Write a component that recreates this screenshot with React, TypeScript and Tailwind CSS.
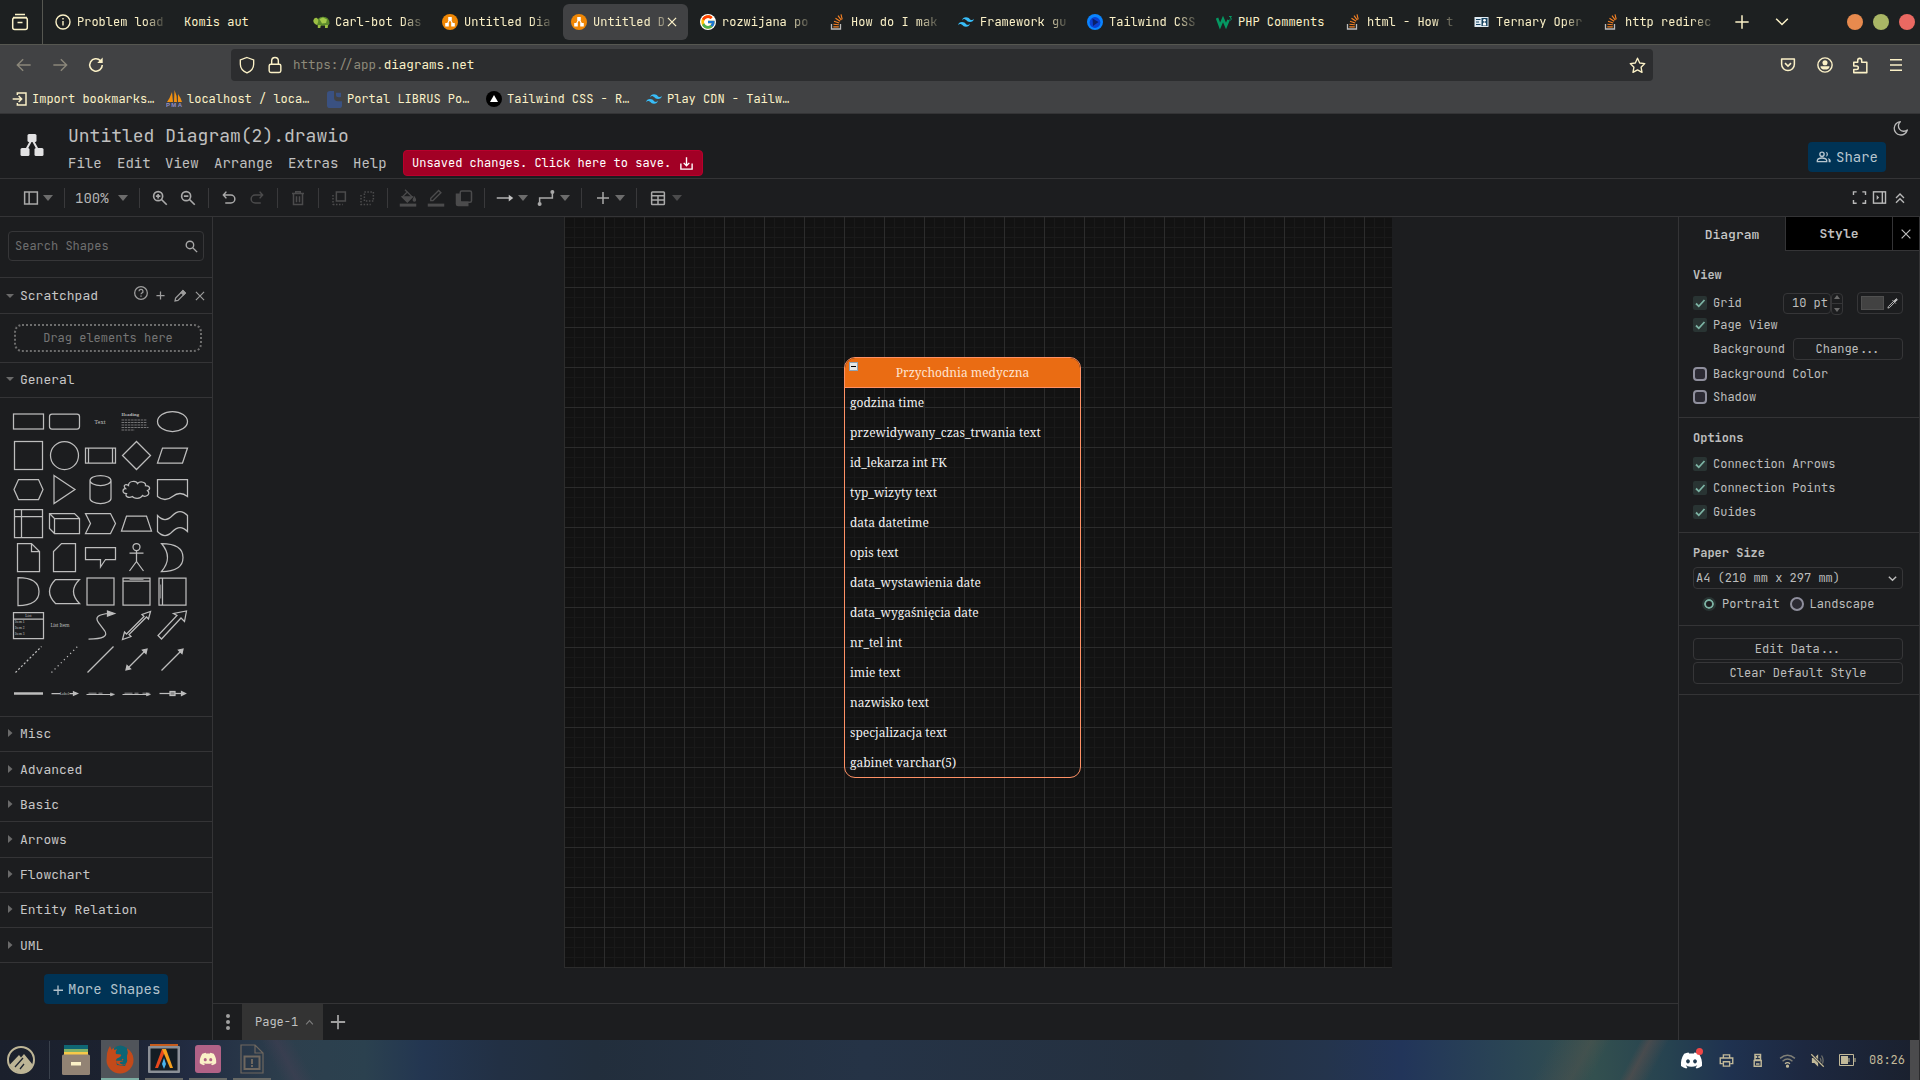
import React from "react";
import { FcGoogle } from "react-icons/fc";
import { FaStackOverflow, FaDiscord } from "react-icons/fa";
import { SiTailwindcss } from "react-icons/si";

type Kids = { children?: React.ReactNode };

/* ---------- small helpers ---------- */

function Icon({ size = 18, className = "", children, sw = 2 }: Kids & { size?: number; className?: string; sw?: number }) {
  return (
    <svg width={size} height={size} viewBox="0 0 24 24" fill="none" stroke="currentColor" strokeWidth={sw} className={"shrink-0 " + className}>
      {children}
    </svg>
  );
}

const Caret = ({ className = "" }: { className?: string }) => (
  <svg width="10" height="6" viewBox="0 0 10 6" className={"shrink-0 " + className} fill="currentColor">
    <path d="M0 0h10L5 6z" />
  </svg>
);

const DrawioFav = () => (
  <svg width="16" height="16" viewBox="0 0 16 16" className="shrink-0">
    <circle cx="8" cy="8" r="8" fill="#f08705" />
    <path d="M8 5L5 10.5M8 5l3 5.500" stroke="#fff" strokeWidth="1.200" />
    <rect x="6.200" y="3" width="3.600" height="3.600" rx=".5" fill="#fff" />
    <rect x="3.200" y="9" width="3.600" height="3.600" rx=".5" fill="#fff" />
    <rect x="9.200" y="9" width="3.600" height="3.600" rx=".5" fill="#fff" />
  </svg>
);

const InfoFav = () => (
  <svg width="16" height="16" viewBox="0 0 16 16" fill="none" stroke="#fbf1c7" strokeWidth="1.400" className="shrink-0">
    <circle cx="8" cy="8" r="7" />
    <path d="M8 7v4.500M8 4v1.600" />
  </svg>
);

const TurtleFav = () => (
  <svg width="17" height="16" viewBox="0 0 17 16" className="shrink-0">
    <path d="M4 10.500Q3.500 3 10 2.800q6.500.2 6.500 7L15 11.800H5z" fill="#5c8a2c" />
    <path d="M6.500 5l3.500-1.500L14 5.500l-1 3.500-4 .5z" fill="#a3c94a" />
    <path d="M.3 6.500Q1 3.300 3.500 3.800 6 5 5 8.500L4 11Q.3 9.500.3 6.500zM4.800 11h3l-.5 3h-2.500zM12 11h3l-.3 3h-2.700z" fill="#9cbf43" />
  </svg>
);

const BlueFav = () => (
  <svg width="16" height="16" viewBox="0 0 16 16" className="shrink-0">
    <circle cx="8" cy="8" r="8" fill="#0a84ff" />
    <circle cx="8" cy="8.500" r="5.400" fill="#0b3fd0" />
    <path d="M5.500 4.500l6 3.500-5.500 4z" fill="#0a1f6b" />
  </svg>
);

const W3Fav = () => (
  <svg width="17" height="16" viewBox="0 0 17 16" fill="none" className="shrink-0">
    <path d="M1 4l3 8 3-7 3 7 2.500-6" stroke="#059862" strokeWidth="2.600" />
    <path d="M13 2.500h2.500L14.200 4q1.500.2 1.200 1.400-.4 1-2.200.6" stroke="#059862" strokeWidth="1" />
  </svg>
);

const CardFav = () => (
  <svg width="15" height="16" viewBox="0 0 15 16" className="shrink-0">
    <rect x=".5" y="3" width="14" height="10" fill="#dfeaf2" />
    <path d="M2 5.500h4.500M2 8h3M2 10.500h4.500" stroke="#16425f" />
    <rect x="7.500" y="4" width="6" height="8" fill="#16425f" />
    <circle cx="10.500" cy="6.300" r="1.400" fill="#fff" />
    <path d="M8.800 11.500q0-3.300 1.700-3.300t1.700 3.300z" fill="#fff" />
  </svg>
);

const StackFav = () => (
  <svg width="16" height="16" viewBox="0 0 16 16" fill="none" className="shrink-0">
    <path d="M2.500 10v5h9v-5" stroke="#bcbbbb" strokeWidth="1.300" />
    <path d="M4.300 12.800h5.500M4.400 10.200l5.400.6M5 7.300l5.200 1.700M6.500 4.300l4.600 3M9 1.600l3.300 4.500M12 .3l1.200 5" stroke="#f48024" strokeWidth="1.150" />
  </svg>
);
const WindFav = ({ s = 16 }: { s?: number }) => <SiTailwindcss size={s} color="#38bdf8" className="shrink-0" />;

/* ---------- browser chrome ---------- */

const tabs: { icon?: React.ReactNode; title: string; active?: boolean }[] = [
  { icon: <InfoFav />, title: "Problem load" },
  { title: "Komis aut" },
  { icon: <TurtleFav />, title: "Carl-bot Das" },
  { icon: <DrawioFav />, title: "Untitled Dia" },
  { icon: <DrawioFav />, title: "Untitled D", active: true },
  { icon: <FcGoogle size={16} className="shrink-0 rounded-full bg-white" />, title: "rozwijana po" },
  { icon: <StackFav />, title: "How do I mak" },
  { icon: <WindFav />, title: "Framework gu" },
  { icon: <BlueFav />, title: "Tailwind CSS" },
  { icon: <W3Fav />, title: "PHP Comments" },
  { icon: <StackFav />, title: "html - How t" },
  { icon: <CardFav />, title: "Ternary Oper" },
  { icon: <StackFav />, title: "http redirec" },
];

function TabBar() {
  return (
    <div className="flex h-[45px] shrink-0 items-center border-b border-[#565751] bg-[#1d2021] text-[#fbf1c7]">
      <div className="flex h-full w-[43px] items-center border-r border-[#565751] pl-[11px]">
        <svg width="18" height="18" viewBox="0 0 18 18" fill="none" stroke="currentColor" strokeWidth="1.500">
          <path d="M4 1.500h10M2 4.500h14" />
          <rect x="1.700" y="4.700" width="14.600" height="11.800" rx="2" />
          <path d="M6.500 9.500h5" />
        </svg>
      </div>
      <div className="ml-1 flex gap-1">
        {tabs.map((t, i) => (
          <div key={i} className={"flex h-9 w-[125px] items-center rounded-md pl-2 " + (t.active ? "bg-[#414244]" : "")}>
            {t.icon && <span className="flex w-[22px] shrink-0">{t.icon}</span>}
            <span
              className={
                "leading-5 whitespace-pre " +
                (t.active
                  ? "[mask-image:linear-gradient(to_right,#000_78%,transparent_112%)]"
                  : t.icon && i !== 9
                    ? "[mask-image:linear-gradient(to_right,#000_78%,transparent_106%)]"
                    : "")
              }
            >
              {t.title}
            </span>
            {t.active && (
              <Icon size={14} sw={2.200}>
                <path d="M5 5l14 14M19 5L5 19" />
              </Icon>
            )}
          </div>
        ))}
      </div>
      <Icon size={20} sw={1.800} className="ml-[12px]">
        <path d="M12 4v16M4 12h16" />
      </Icon>
      <Icon size={20} sw={1.800} className="ml-5">
        <path d="M5 8l7 7 7-7" />
      </Icon>
      <div className="ml-[55px] flex gap-2.5">
        <div className="size-4 rounded-full bg-[#e78a4e]" />
        <div className="size-4 rounded-full bg-[#a9b665]" />
        <div className="size-4 rounded-full bg-[#ea6962]" />
      </div>
    </div>
  );
}

function NavBar() {
  return (
    <div className="flex h-[40px] items-center text-[#fbf1c7]">
      <Icon size={20} sw={1.700} className="ml-[14px] text-[#8b877a]">
        <path d="M20 12H4M11 5l-7 7 7 7" />
      </Icon>
      <Icon size={20} sw={1.700} className="ml-4 text-[#8b877a]">
        <path d="M4 12h16M13 5l7 7-7 7" />
      </Icon>
      <Icon size={20} sw={1.900} className="ml-4">
        <path d="M19.500 12a7.500 7.500 0 1 1-2.200-5.300L19 8" />
        <path d="M20 3v6.500h-6.500z" fill="currentColor" stroke="none" />
      </Icon>
      <div className="ml-[125px] flex h-8 w-[1422px] items-center rounded bg-[#2c2d2f] pl-[6px]">
        <Icon size={20} sw={1.600}>
          <path d="M12 3l8 3v5c0 5-3.500 8.500-8 10.500C7.500 19.500 4 16 4 11V6z" />
        </Icon>
        <Icon size={20} sw={1.700} className="ml-2">
          <rect x="5" y="11" width="14" height="10" rx="2" />
          <path d="M8 11V7a4 4 0 0 1 8 0v4" />
        </Icon>
        <span className="mt-px ml-[8px] text-[12.6px] text-[#8e8a7a]">
          https://app.<span className="text-[#fbf1c7]">diagrams.net</span>
        </span>
        <Icon size={19} sw={1.700} className="mr-[6px] ml-auto">
          <path d="M12 2.800l2.800 6 6.400.8-4.700 4.500 1.200 6.600-5.700-3.200-5.700 3.200 1.200-6.600L2.800 9.600l6.400-.8z" strokeLinejoin="round" />
        </Icon>
      </div>
      <Icon size={18} sw={2} className="ml-[126px]">
        <path d="M3.500 4h17v7a8.500 8.500 0 0 1-17 0z" strokeLinejoin="round" />
        <path d="M8 9.500l4 4 4-4" />
      </Icon>
      <Icon size={18} sw={1.900} className="ml-[19px]">
        <circle cx="12" cy="12" r="9.500" />
        <circle cx="12" cy="9" r="3.400" fill="currentColor" stroke="none" />
        <path d="M6 13.500h12q0 4.500-6 4.500t-6-4.500z" fill="currentColor" stroke="none" />
      </Icon>
      <Icon size={19} sw={1.900} className="ml-[17px]">
        <path d="M3.500 8h5V5.500a2.500 2.500 0 0 1 5 0V8H20v13H3.500v-4H7a2.200 2.200 0 0 0 0-4.500H3.500z" strokeLinejoin="round" />
      </Icon>
      <Icon size={18} sw={1.700} className="ml-[17px]">
        <path d="M4 5h16M4 12h16M4 19h16" />
      </Icon>
    </div>
  );
}

function Bookmarks() {
  return (
    <div className="flex h-[28px] items-center whitespace-nowrap text-[#fbf1c7]">
      <div className="flex w-[154px] items-center gap-1 pl-3">
        <Icon size={16} sw={2.200}>
          <path d="M8 6V3h13v18H8v-3" />
          <path d="M1 12h13M10 7.500l4.500 4.500-4.500 4.500" />
        </Icon>
        Import bookmarks…
      </div>
      <div className="flex w-[160px] items-center gap-1 pl-3">
        <svg width="17" height="18" viewBox="0 0 17 18" className="shrink-0">
          <path d="M1 12Q4 8 6 2l1 10zM8 12l.5-12Q11 5 11 12zM12 12V4q3 4 4 8z" fill="#f29111" />
          <text x="0" y="17" fontSize="6" fontWeight="bold" fontFamily="Liberation Sans, sans-serif" fill="#8d8dc8" textLength="16">PMA</text>
        </svg>
        localhost / loca…
      </div>
      <div className="flex w-[160px] items-center gap-1 pl-3">
        <svg width="17" height="17" viewBox="0 0 17 20" preserveAspectRatio="none" className="shrink-0">
          <rect x="1" y="0" width="15" height="20" rx="3" fill="#3a5181" />
          <path d="M8 0v8q0 4 4 4h4V0z" fill="#414244" />
          <path d="M10 2h5v5q-5 1-5-2z" fill="#3a5181" />
        </svg>
        Portal LIBRUS Po…
      </div>
      <div className="flex w-[160px] items-center gap-[5px] pl-3">
        <svg width="16" height="16" viewBox="0 0 16 16" className="shrink-0">
          <circle cx="8" cy="8" r="8" />
          <path d="M8 4l4 7H4z" fill="#fff" />
        </svg>
        Tailwind CSS - R…
      </div>
      <div className="flex items-center gap-[5px] pl-3">
        <WindFav />
        Play CDN - Tailw…
      </div>
    </div>
  );
}

/* ---------- diagrams.net header ---------- */

function Header() {
  return (
    <div className="flex h-[65px] shrink-0 justify-between border-b border-[#343436]">
      <div className="flex">
        <svg width="26" height="24" viewBox="0 0 26 24" className="mt-[19px] ml-[19px]" fill="#e2e2e3">
          <path d="M13 6L6.500 18M13 6l6.500 12" stroke="#e2e2e3" strokeWidth="2" />
          <rect x="8.500" y="1" width="9" height="8" rx="1.500" />
          <rect x="1.500" y="15" width="9" height="8" rx="1.500" />
          <rect x="15.500" y="15" width="9" height="8" rx="1.500" />
        </svg>
        <div className="ml-[23px] flex flex-col text-[#c0c0c0]">
          <div className="mt-[10px] h-6 text-[18px] leading-6">Untitled Diagram(2).drawio</div>
          <div className="mt-[2px] flex h-[26px] items-center text-[14px]">
            <span className="w-[49px]">File</span>
            <span className="w-[48px]">Edit</span>
            <span className="w-[49px]">View</span>
            <span className="w-[74px]">Arrange</span>
            <span className="w-[65px]">Extras</span>
            <span className="w-[50px]">Help</span>
            <div className="flex h-[26px] w-[300px] items-center rounded-sm border border-[#b8002c] bg-[#a20025] pl-[8px] text-[12px] text-white">
              Unsaved changes. Click here to save.
              <Icon size={15} sw={2.200} className="ml-2">
                <path d="M12 2v13M7.500 11l4.500 4.500 4.500-4.500M3 12v9h18v-9" />
              </Icon>
            </div>
          </div>
        </div>
      </div>
      <div className="flex w-[120px] flex-col items-end">
        <Icon size={16} sw={2} className="mt-[6px] mr-[11px] text-[#b9b9b9]">
          <path d="M11 2.500A8 8 0 0 0 21.500 15 10 10 0 1 1 11 2.500z" strokeLinejoin="round" />
        </Icon>
        <div className="mt-[6px] mr-[34px] flex h-[30px] w-[78px] items-center rounded bg-[#003355] pl-[8px] text-[14px] text-[#b9c6cf]">
          <Icon size={16} sw={2} className="mr-1">
            <circle cx="9" cy="8" r="3.200" />
            <path d="M2 19v-2q1-3.500 7-3.500t7 3.500v2z" />
            <path d="M14.500 4.200q3.500.3 3.500 3.800t-3.500 3.800q3-3.800 0-7.600zM17.500 13.500Q22 14.500 22 17v3h-3v-3q0-2-1.500-3.500z" fill="currentColor" stroke="none" />
          </Icon>
          Share
        </div>
      </div>
    </div>
  );
}

const Sep = () => <div className="ml-[11px] h-5 w-px shrink-0 bg-[#39393b]" />;

function Toolbar() {
  return (
    <div className="flex h-[38px] shrink-0 items-center border-b border-[#343436] text-[#a9a9a9]">
      <Icon className="ml-[22px]">
        <rect x="3.500" y="4" width="17" height="16" />
        <path d="M9.500 4v16" />
      </Icon>
      <Caret className="ml-[3px] text-[#6c6c6c]" />
      <Sep />
      <span className="ml-2.5 w-[34px] text-[14px] text-[#b5b5b5]">100%</span>
      <Caret className="ml-[9px] text-[#6c6c6c]" />
      <Sep />
      <Icon className="ml-[11px]" sw={2.200}>
        <circle cx="9.500" cy="9.500" r="6" />
        <path d="M14 14l7 7M9.500 6.500v6M6.500 9.500h6" />
      </Icon>
      <Icon className="ml-2.5" sw={2.200}>
        <circle cx="9.500" cy="9.500" r="6" />
        <path d="M14 14l7 7M6.500 9.500h6" />
      </Icon>
      <Sep />
      <Icon className="ml-[11px]">
        <path d="M8.500 3.500L4.500 8l4 4.500M5 8h9.500a5.300 5.300 0 0 1 0 10.600H7" />
      </Icon>
      <Icon className="ml-2.5 text-[#4b4b4c]">
        <path d="M15.500 3.500l4 4.500-4 4.500M19 8H9.500a5.300 5.300 0 0 0 0 10.600H17" />
      </Icon>
      <Sep />
      <Icon className="ml-[11px] text-[#4b4b4c]">
        <path d="M4 6h16M9 5V3.500h6V5M6 6v14.500h12V6M10 9.500v8M14 9.500v8" />
      </Icon>
      <Sep />
      <Icon className="ml-[11px] text-[#4b4b4c]">
        <rect x="8.500" y="4" width="12" height="12" />
        <path d="M4 8v13M4 20.500h13" strokeDasharray="2 2" />
      </Icon>
      <Icon className="ml-2.5 text-[#4b4b4c]">
        <rect x="8.500" y="4" width="12" height="12" strokeDasharray="2 2" />
        <path d="M4 8v12.500h13" strokeDasharray="2 2" />
      </Icon>
      <Sep />
      <Icon className="ml-[11px] text-[#4b4b4c]" sw={1.800}>
        <path d="M8 1l3 3-6.500 6.500L11 17l6.500-6.500L11 4" />
        <path d="M4.500 10.500h13L11 17zM20.500 11q3 5 0 5t0-5z" fill="currentColor" />
        <path d="M1 21.500h22" strokeWidth="4" />
      </Icon>
      <Icon className="ml-2.5 text-[#4b4b4c]" sw={1.900}>
        <path d="M5 15.500v-3.200L15.500 2l3 3L8 15.500z" />
        <path d="M1 21.500h22" strokeWidth="4" />
      </Icon>
      <Icon className="ml-2.5 text-[#4b4b4c]">
        <rect x="7" y="2.500" width="15" height="15" rx="2" />
        <path d="M2 7h5v10.500h10V22H4q-2 0-2-2z" fill="currentColor" />
      </Icon>
      <Sep />
      <Icon className="ml-[11px] text-[#c2c2c2]" sw={1.800}>
        <path d="M1 12h19" />
        <path d="M17 7.500l6 4.500-6 4.500z" fill="currentColor" stroke="none" />
      </Icon>
      <Caret className="ml-[4px] text-[#6c6c6c]" />
      <Icon className="ml-[9px]">
        <path d="M3.500 18v-6h17V6" />
        <circle cx="3.500" cy="20" r="1.700" fill="currentColor" />
        <circle cx="20.500" cy="4" r="1.700" fill="currentColor" />
      </Icon>
      <Caret className="ml-[5px] text-[#6c6c6c]" />
      <Sep />
      <Icon className="ml-[12px]">
        <path d="M12 4v16M4 12h16" />
      </Icon>
      <Caret className="ml-[3px] text-[#6c6c6c]" />
      <Sep />
      <Icon className="ml-[12px]">
        <rect x="3.500" y="4" width="17" height="16.500" rx="1" />
        <path d="M3.500 9h17M3.500 14.500h17M12 9v11.500" />
      </Icon>
      <Caret className="ml-[5px] text-[#4b4b4c]" />
      <div className="mr-[12px] ml-auto flex items-center gap-[3px] text-[#b9b9b9]">
        <Icon size={17}>
          <path d="M3.500 8.500V4H8M16 4h4.500v4.500M20.500 15.500V20H16M8 20H3.500v-4.500" />
        </Icon>
        <Icon size={17}>
          <rect x="3.500" y="4" width="17" height="16" />
          <path d="M16 4v16" strokeWidth="2" />
          <path d="M8 8.500l3.500 3.500L8 15.500z" fill="currentColor" stroke="none" />
        </Icon>
        <Icon size={16} className="ml-px">
          <path d="M6 12l6-6 6 6M6 19l6-6 6 6" />
        </Icon>
      </div>
    </div>
  );
}

/* ---------- shape palette ---------- */

const serif = { fontFamily: '"Noto Serif", "DejaVu Serif", serif', fill: "#bdbdbd", stroke: "none" };

const shapes: React.ReactNode[] = [
  <rect x="-15" y="-7.500" width="30" height="15" />,
  <rect x="-15" y="-7.500" width="30" height="15" rx="2.500" />,
  <text x="-.5" y="2.500" fontSize="5.500" textAnchor="middle" {...serif}>Text</text>,
  <g>
    <text x="-15" y="-5.500" fontSize="4.200" fontWeight="bold" {...serif}>Heading</text>
    <path d="M-15-1.500H10M-15 1H10M-15 3.500H10M-15 6H12M-15 8.500H-2" strokeWidth=".8" strokeDasharray="2.500 .7" opacity=".7" />
  </g>,
  <ellipse rx="15" ry="10" />,

  <rect x="-14" y="-14" width="28" height="28" />,
  <circle r="14" />,
  <path d="M-15-7.500H15V7.500H-15zM-12-7.500V7.500M12-7.500V7.500" />,
  <path d="M0-14L14 0 0 14-14 0z" />,
  <path d="M-15 7.500L-10-7.500H15L10 7.500z" />,

  <path d="M-14.500 0L-10-10H10L14.500 0 10 10H-10z" />,
  <path d="M-10.500-14L10.500 0-10.500 14z" />,
  <path d="M-10.500-9a10.500 5 0 0 1 21 0V9a10.500 5 0 0 1-21 0zM-10.500-9a10.500 5 0 0 0 21 0" />,
  <path d="M-8-4C-8-9 0-9 1-6 4-9 10-7 9-4 14-4 14 0 11 1 15 5 9 8 6 6 4 10-3 9-4 7-8 9-12 7-10 4-15 4-14-1-11-1-14-4-11-6-8-4z" />,
  <path d="M-15-10H15V7Q7.500 1 0 7T-15 7z" />,

  <path d="M-14-14H14V14H-14zM-14-7H14M-7-14V14" />,
  <path d="M-15-10H10L15-5V10H-10L-15 5zM-15-10L-10-5V10M-10-5H15" />,
  <path d="M-15-10H10L15 0 10 10H-15L-10 0z" />,
  <path d="M-15 7.500L-10-7.500H10L15 7.500z" />,
  <path d="M-15-8Q-7.500 0 0-8T15-8V8Q7.500 0 0 8T-15 8z" />,

  <path d="M-11-14H3L11-6V14H-11zM3-14V-6H11" />,
  <path d="M-3-14H11V14H-11V-6z" />,
  <path d="M-15-10H15V2H5L0 9.500V2H-15z" />,
  <g>
    <circle cy="-10.500" r="3.500" />
    <path d="M0-7V4M-7-4.500H7M-7 13.500L0 4 7 13.500" />
  </g>,
  <path d="M-11-14Q10.500-14 10.500 0T-11 14Q1 0-11-14z" />,

  <path d="M-10.500-14Q10.500-14 10.500 0T-10.500 14z" />,
  <path d="M-9-12H15Q3 0 15 12H-9Q-21 0-9-12z" />,
  <rect x="-13.500" y="-13.500" width="27" height="27" />,
  <g>
    <path d="M-13.500-13.500H13.500V13.500H-13.500zM-13.500-10.500H13.500" />
    <path d="M-7-12H7" strokeWidth=".7" />
  </g>,
  <g>
    <path d="M-13.500-13.500H13.500V13.500H-13.500zM-10-13.500V13.500" />
    <path d="M-11.800-7V7" strokeWidth=".7" />
  </g>,

  <g>
    <path d="M-15-13H15V13H-15zM-15-6.500H15" />
    <text x="0" y="-8.200" fontSize="3.600" textAnchor="middle" {...serif}>List</text>
    <text x="-13.500" y="-2.500" fontSize="3.200" {...serif}>Item 1</text>
    <text x="-13.500" y="3.500" fontSize="3.200" {...serif}>Item 2</text>
    <text x="-13.500" y="9.500" fontSize="3.200" {...serif}>Item 3</text>
  </g>,
  <text x="-14" y="1.500" fontSize="4.800" textLength="19" {...serif}>List Item</text>,
  <g>
    <path d="M-12 13.500Q10 13.500 4 5L-2-3Q-8-11 9-12" />
    <path d="M7-14.500L14-12 7-9.500z" fill="#bdbdbd" />
  </g>,
  <path d="M14-14L12-6.500 10-8.500-7.500 9-5.500 11-14 14-12 6.500-10 8.500 7.500-9 5.500-11z" />,
  <path d="M14-14.500L12-4 8.500-7.500-11 13.500-14.500 10 4.500-10 1-12z" />,

  <path d="M-13 13L13-13" strokeDasharray="2 2" />,
  <path d="M-13 13L13-13" strokeDasharray="1.200 3.200" />,
  <path d="M-13 13L13-13" />,
  <g>
    <path d="M-9 9L9-9" />
    <path d="M-10.500 10.500L-9.500 6-6 9.500zM10.500-10.500L9.500-6 6-9.500z" fill="#bdbdbd" />
  </g>,
  <g>
    <path d="M-11 11L9-9" />
    <path d="M10.500-10.500L9.500-6 6-9.500z" fill="#bdbdbd" />
  </g>,

  <path d="M-14.500 0H14.500" strokeWidth="2.500" />,
  <g>
    <path d="M-13 0H-4M5 0H10" />
    <path d="M9-1.800L13 0 9 1.800z" fill="#bdbdbd" />
    <text x="0" y="1.500" fontSize="3.500" textAnchor="middle" {...serif}>Label</text>
  </g>,
  <g>
    <path d="M-14 1H12" strokeWidth="1" />
    <path d="M-12-.3H-4M-2-.3H2" strokeWidth=".7" />
    <path d="M10-.6L14 .9 10 2.400z" fill="#bdbdbd" strokeWidth=".6" />
  </g>,
  <g>
    <path d="M-14 1H12" strokeWidth="1" />
    <path d="M-12-.3H-4M-2-.3H2M6-.3H13" strokeWidth=".7" />
    <path d="M10-.6L14 .9 10 2.400z" fill="#bdbdbd" strokeWidth=".6" />
  </g>,
  <g>
    <path d="M-13 0H10" />
    <path d="M9-2L13 0 9 2z" fill="#bdbdbd" />
    <rect x="-2.500" y="-2" width="5" height="4" fill="#888" />
  </g>,
];

function SectionTitle({ children, open }: Kids & { open?: boolean }) {
  return (
    <div className="flex items-center text-[13px] text-[#c6c6c6]">
      <svg width="20" height="8" viewBox="0 0 20 8" fill="#6a6a6a" className="shrink-0">
        {open ? <path d="M6 2h8l-4 4z" /> : <path d="M8 0v8l4.500-4z" />}
      </svg>
      {children}
    </div>
  );
}

const closed: [string, string][] = [
  ["Misc", "h-[35px] pb-[2px]"],
  ["Advanced", "h-[35px]"],
  ["Basic", "h-[35px]"],
  ["Arrows", "h-[36px] pb-px"],
  ["Flowchart", "h-[35px] pb-[2px]"],
  ["Entity Relation", "h-[35px] pb-[2px]"],
  ["UML", "h-[35px]"],
];

function Sidebar() {
  return (
    <div className="flex w-[213px] shrink-0 flex-col border-r border-[#343436]">
      <div className="h-[61px] shrink-0 border-b border-[#343436] px-2 pt-[14px]">
        <div className="flex h-[30px] items-center justify-between rounded border border-[#363638] pr-[4px] pl-[6px] text-[#6f6f6f]">
          Search Shapes
          <Icon size={15} sw={2.200} className="text-[#a8a8a8]">
            <circle cx="9.500" cy="9.500" r="6" />
            <path d="M14 14l7 7" />
          </Icon>
        </div>
      </div>
      <div className="flex h-9 shrink-0 items-center justify-between border-b border-[#343436] pr-[5px]">
        <SectionTitle open>Scratchpad</SectionTitle>
        <div className="flex items-center text-[#9d9d9d]">
          <Icon size={16} sw={1.900} className="-mt-1.5">
            <circle cx="12" cy="12" r="9.500" />
            <path d="M9 9.500a3 3 0 1 1 4 2.800q-1 .5-1 1.700M12 15.800v2" />
          </Icon>
          <Icon size={15} sw={2} className="ml-[4px]">
            <path d="M12 5.500v13M5.500 12h13" />
          </Icon>
          <Icon size={14} sw={2.200} className="ml-[5px]">
            <path d="M3.500 20.500l1-5L17 3l4 4L8.500 19.500z" />
            <path d="M14 6l4 4 3-3-4-4z" fill="currentColor" />
          </Icon>
          <Icon size={14} sw={2} className="ml-[6px]">
            <path d="M5 5l14 14M19 5L5 19" />
          </Icon>
        </div>
      </div>
      <div className="h-[49px] shrink-0 border-b border-[#343436] pt-[10px] pr-[10px] pl-[14px]">
        <div className="flex h-[28px] items-center justify-center rounded-[8px] border-2 border-dotted border-[#6d6d6d] text-[#757575]">Drag elements here</div>
      </div>
      <div className="flex h-[35px] shrink-0 items-center border-b border-[#343436] pb-[2px]">
        <SectionTitle open>General</SectionTitle>
      </div>
      <div className="grid h-[319px] shrink-0 auto-rows-[34px] grid-cols-[repeat(5,36px)] border-b border-[#343436] pt-[7px] pl-2.5">
        {shapes.map((s, i) => (
          <svg key={i} width="36" height="34" viewBox="0 0 36 34" fill="none" stroke="#bdbdbd" strokeWidth="1.250">
            <g transform="translate(18.5 16.5)">{s}</g>
          </svg>
        ))}
      </div>
      {closed.map(([name, h]) => (
        <div key={name} className={"flex shrink-0 items-center border-b border-[#343436] " + h}>
          <SectionTitle>{name}</SectionTitle>
        </div>
      ))}
      <div className="mt-[11px] ml-11 flex h-[30px] w-[124px] items-center rounded bg-[#003355] pl-[8px] text-[14px] text-[#b3c2cb]">
        <Icon size={12} sw={2.600} className="mt-px mr-1">
          <path d="M12 3v19M3 12.500h19" />
        </Icon>
        More Shapes
      </div>
    </div>
  );
}

/* ---------- canvas ---------- */

const fields = [
  "godzina time",
  "przewidywany_czas_trwania text",
  "id_lekarza int FK",
  "typ_wizyty text",
  "data datetime",
  "opis text",
  "data_wystawienia date",
  "data_wygaśnięcia date",
  "nr_tel int",
  "imie text",
  "nazwisko text",
  "specjalizacja text",
  "gabinet varchar(5)",
];

function Canvas() {
  return (
    <div className="flex min-w-0 flex-1 flex-col">
      <div className="h-[786px] shrink-0 pl-[351px]">
        <div className="relative h-[751px] w-[828px] bg-[#121212] bg-[linear-gradient(to_right,#2c2c2c_1px,transparent_1px),linear-gradient(to_bottom,#2c2c2c_1px,transparent_1px),linear-gradient(to_right,#191919_1px,transparent_1px),linear-gradient(to_bottom,#191919_1px,transparent_1px)] bg-[size:40px_40px,40px_40px,10px_10px,10px_10px] bg-[position:0_30px]">
          <div className="absolute top-[140px] left-[280px] w-[237px] overflow-hidden rounded-[11px] border border-[#ff9165] font-['Noto_Serif','DejaVu_Serif_Condensed','DejaVu_Serif',serif] text-[12px] text-[#f0f0f0]">
            <div className="flex h-[30px] items-center justify-center border-b border-[#ff9165] bg-[#ea6c13] text-[#ffe3cf]">Przychodnia medyczna</div>
            <div className="absolute top-[4px] left-[4px] flex size-[9px] items-center justify-center border border-[#8fa3b5] bg-[#e6e6e6]">
              <div className="h-px w-[5px] bg-black" />
            </div>
            {fields.map((f) => (
              <div key={f} className="flex h-[30px] items-center pl-[5px] last:h-[29px]">
                {f}
              </div>
            ))}
          </div>
        </div>
      </div>
      <div className="flex flex-1 items-center border-t border-[#343436] text-[#c0c0c0]">
        <svg width="29" height="18" viewBox="0 0 29 18" fill="#a0a0a0">
          <circle cx="15" cy="3" r="2" />
          <circle cx="15" cy="9" r="2" />
          <circle cx="15" cy="15" r="2" />
        </svg>
        <div className="flex h-full w-[81px] items-center bg-[#333333] pl-[13px]">
          Page-1
          <Icon size={9} sw={3} className="ml-[7px] text-[#7c7c7c]">
            <path d="M3 17l9-10 9 10" />
          </Icon>
        </div>
        <Icon size={18} sw={2.400} className="ml-[6px] text-[#a0a0a0]">
          <path d="M12 2.500v19M2.500 12h19" />
        </Icon>
      </div>
    </div>
  );
}

/* ---------- format panel ---------- */

const Check = ({ on }: { on?: boolean }) =>
  on ? (
    <svg width="14" height="14" viewBox="0 0 14 14" className="shrink-0">
      <rect width="14" height="14" rx="2" fill="#293433" />
      <path d="M3 7.500l2.800 2.800L11.500 4" fill="none" stroke="#7db3a4" strokeWidth="1.800" />
    </svg>
  ) : (
    <span className="size-[14px] shrink-0 rounded-sm border-2 border-[#8f8f9d] bg-[#2b2a33]" />
  );

function Option({ on, h, children }: Kids & { on?: boolean; h: string }) {
  return (
    <div className={"flex items-center gap-[6px] " + h}>
      <Check on={on} />
      {children}
    </div>
  );
}

function FormatPanel() {
  return (
    <div className="flex w-[242px] shrink-0 flex-col border-x border-[#343436] text-[#bdbdbd]">
      <div className="flex h-[34px] shrink-0 text-[13px]">
        <div className="flex w-[106px] items-center justify-center font-medium text-[#c8c8c8]">Diagram</div>
        <div className="flex w-[108px] items-center justify-center border-x border-b border-[#343436] bg-black font-bold">Style</div>
        <div className="flex flex-1 items-center justify-center border-b border-[#343436] bg-black">
          <Icon size={14} sw={2}>
            <path d="M4.500 4.500l15 15M19.500 4.500l-15 15" />
          </Icon>
        </div>
      </div>
      <div className="h-[167px] shrink-0 border-b border-[#343436] pt-[14px] pr-[16px] pl-[14px]">
        <div className="flex h-5 items-center font-bold">View</div>
        <div className="mt-[7px] flex h-[22px] items-center">
          <div className="w-[90px]">
            <Option on h="h-[22px]">Grid</Option>
          </div>
          <div className="flex h-[21px] w-[48px] items-center justify-end rounded border border-[#363638] pr-[2px]">10 pt</div>
          <div className="mt-px flex h-[22px] w-[12px] flex-col items-center justify-around rounded border border-[#363638] text-[#6a6a6a]">
            <svg width="6" height="4" viewBox="0 0 6 4" fill="currentColor">
              <path d="M0 4h6L3 0z" />
            </svg>
            <div className="h-px w-full bg-[#363638]" />
            <svg width="6" height="4" viewBox="0 0 6 4" fill="currentColor">
              <path d="M0 0h6L3 4z" />
            </svg>
          </div>
          <div className="ml-auto flex h-[22px] w-[46px] items-center justify-between rounded border border-[#363638] px-[3px]">
            <div className="h-[14px] w-[23px] border border-[#505050] bg-[#424242]" />
            <Icon size={13} sw={1.800}>
              <path d="M12 6l6 6M14 8L4.500 17.500l-1 3 3-1L16 10" />
              <path d="M14.500 7.500L19 3l2 2-4.500 4.500z" fill="currentColor" />
            </Icon>
          </div>
        </div>
        <Option on h="h-[22px]">Page View</Option>
        <div className="mt-[2px] flex h-[22px] items-center justify-between pl-5">
          Background
          <div className="flex h-[22px] w-[110px] items-center justify-center rounded border border-[#363638]">Change...</div>
        </div>
        <Option h="mt-[4px] h-5">Background Color</Option>
        <Option h="mt-[3px] h-5">Shadow</Option>
      </div>
      <div className="h-[115px] shrink-0 border-b border-[#343436] pt-[10px] pl-[14px]">
        <div className="flex h-5 items-center font-bold">Options</div>
        <Option on h="mt-[4px] h-6">Connection Arrows</Option>
        <Option on h="h-6">Connection Points</Option>
        <Option on h="h-6">Guides</Option>
      </div>
      <div className="h-[93px] shrink-0 border-b border-[#343436] pt-[10px] pr-[16px] pl-[14px]">
        <div className="flex h-5 items-center font-bold">Paper Size</div>
        <div className="mt-[4px] flex h-[22px] items-center justify-between rounded border border-[#363638] pr-[4px] pl-[2px]">
          A4 (210 mm x 297 mm)
          <Icon size={11} sw={3}>
            <path d="M4 8l8 8 8-8" />
          </Icon>
        </div>
        <div className="mt-[5px] flex h-5 items-center pl-[9px]">
          <span className="m-[2px] size-[10px] rounded-full border-2 border-[#7db3a4] bg-[#1c1d1f] outline-2 outline-[#293433]" />
          <span className="ml-[6px]">Portrait</span>
          <span className="mr-[6px] ml-[10px] size-[14px] rounded-full border-2 border-[#8f8f9d] bg-[#2b2a33]" />
          Landscape
        </div>
      </div>
      <div className="flex h-[69px] shrink-0 flex-col gap-[2px] border-b border-[#343436] pt-[12px] pr-[16px] pl-[14px]">
        <div className="flex h-[22px] items-center justify-center rounded border border-[#363638]">Edit Data...</div>
        <div className="flex h-[22px] items-center justify-center rounded border border-[#363638]">Clear Default Style</div>
      </div>
    </div>
  );
}

/* ---------- desktop taskbar ---------- */

function Task({ children, active }: Kids & { active?: boolean }) {
  return (
    <div className={"flex h-10 w-[38px] items-center justify-center border-b-2 " + (active ? "border-[#7daea3] bg-[#50545a]" : "border-[#676966]")}>
      {children}
    </div>
  );
}

function Taskbar() {
  return (
    <div className="flex h-10 shrink-0 items-center bg-[linear-gradient(62deg,transparent_14.5%,#4a3f5566_15.3%,transparent_16.2%),linear-gradient(118deg,transparent_80%,#5a544c66_82%,transparent_83%,transparent_84.5%,#6a504c77_85%,transparent_86%),linear-gradient(to_right,#1b202c_0%,#1c2230_6%,#222c42_10%,#2d3f4d_15%,#2b414f_19%,#233651_22%,#223044_26%,#222e3c_31%,#253346_45%,#24303f_62%,#24344c_69%,#22355a_73%,#2b4654_79%,#33504f_83%,#264250_87%,#1f3250_90%,#1d2840_94%,#1a202d_100%)] text-[#c2b999]">
      <svg width="28" height="28" viewBox="0 0 28 28" className="ml-[7px]">
        <circle cx="14" cy="14" r="13" fill="none" stroke="#bdb596" strokeWidth="2" />
        <path d="M2.500 19L12 9l2 2.500 3-3.500 9 11a13 13 0 0 1-23.500 0z" fill="#bdb596" />
        <path d="M8 21l8-9M13 23l4-5" stroke="#1c222e" strokeWidth="1.300" />
      </svg>
      <div className="ml-[14px] h-[38px] w-px bg-[#3a414c]" />
      <svg width="28" height="30" viewBox="0 0 28 30" className="ml-3">
        <path d="M2 0h24v5H2z" fill="#0f6674" />
        <path d="M2 4h24v4H2z" fill="#7fb069" />
        <path d="M2 7h24v4H2z" fill="#f7c948" />
        <rect y="9.500" width="28" height="20.500" rx="1.500" fill="#928374" />
        <rect x="9" y="17" width="10" height="3.500" fill="#fbf1c7" />
      </svg>
      <div className="ml-[11px] flex gap-[6px]">
        <Task active>
          <svg width="28" height="30" viewBox="0 0 28 30">
            <circle cx="14" cy="16" r="13.500" fill="#c34a1a" />
            <path d="M8 4Q14-1 21 4l2 9-4 9-8-1-2-8z" fill="#0d6575" />
            <path d="M1 16Q0 8 4 2l2 5 5-2q-2 3-1 5l5 .5q1 2-4 4-2 2 0 5 4 3 8 1 4-2 2-5-4 0-5 1-1-3 4-3 3-5 1-9 7 5 6 13z" fill="#c34a1a" />
            <path d="M15 13l6-3v8q-2 4-6 2-2-1-1-2 3 0 4-2-2-1-3-3z" fill="#0d6575" />
          </svg>
        </Task>
        <Task>
          <svg width="32" height="30" viewBox="0 0 32 30">
            <path d="M2 0h28v4H2z" fill="#c65b1c" />
            <rect y="2" width="32" height="27" rx="1" fill="#8b8f96" />
            <rect x="2.500" y="4.500" width="27" height="22" fill="#141d24" />
            <path d="M14 5h4l-8 19H7z" fill="#e8481c" />
            <path d="M14 5h4l7 19h-3z" fill="#f5a01d" />
            <path d="M14 20l2-6 2 6-2 5z" fill="#49b4ee" />
          </svg>
        </Task>
        <Task>
          <div className="flex h-[28px] w-[26px] items-center justify-center rounded-[3px] bg-[#b16286] text-[#fbf1c7]">
            <FaDiscord size={18} />
          </div>
        </Task>
        <Task>
          <svg width="24" height="30" viewBox="0 0 24 30" fill="none" stroke="#6e675f" strokeWidth="1.200">
            <path d="M1 1h14l8 8v20H1zM15 1v8h8" />
            <rect x="4.500" y="12.500" width="15" height="12.500" strokeWidth="2" />
            <path d="M12 15v5M12 21v2" strokeWidth="2" />
          </svg>
        </Task>
      </div>
      <div className="ml-auto flex items-center">
        <div className="relative mr-[16px] text-white">
          <FaDiscord size={23} />
          <div className="absolute -top-px right-0 size-[7px] rounded-full bg-[#f04747]" />
        </div>
        <Icon size={15} sw={2.200} className="mr-4">
          <path d="M7 8V3h10v5M6 17H2V8h20v9h-4" />
          <path d="M7 14h10v7H7z" />
        </Icon>
        <svg width="15" height="15" viewBox="0 0 15 15" className="mr-[14px]">
          <path d="M5 1.500h5.500V7H5zM6.500 3v2M9 3v2" fill="none" stroke="currentColor" strokeWidth="1.500" />
          <path d="M4.200 7.500h7v5.800h-7zM6 11h3.500" fill="none" stroke="currentColor" strokeWidth="1.400" />
        </svg>
        <Icon size={17} sw={2} className="mr-[14px]">
          <path d="M1.500 9q10.500-9 21 0M5 13q7-6 14 0" opacity=".6" />
          <path d="M8.500 16.500q3.500-3 7 0" />
          <circle cx="12" cy="20" r="1.300" fill="currentColor" />
        </Icon>
        <Icon size={15} sw={2} className="mr-[14px]">
          <path d="M3 8h4l6-6v20l-6-6H3z" fill="currentColor" stroke="none" />
          <path d="M16 8q3 4 0 8M18.500 4q5 8 0 16" opacity=".5" />
          <path d="M2 2l20 20" stroke="#1b222f" strokeWidth="4" />
          <path d="M2 2l20 20" />
        </Icon>
        <svg width="17" height="12" viewBox="0 0 17 12" className="mr-[13px]">
          <path d="M.5.5h14v11H.5z" fill="none" stroke="currentColor" />
          <path d="M2 2h7v2.500h2v1H9v1h2v1H9V10H2zM15.500 4h1v4h-1z" fill="currentColor" />
        </svg>
        <span className="w-[41px]">08:26</span>
        <div className="h-10 w-[9px] bg-[#4b4b4d]" />
        <div className="h-10 w-px bg-[#2c2c2e]" />
      </div>
    </div>
  );
}

export default function App() {
  return (
    <div className="flex h-[1080px] w-[1920px] flex-col overflow-hidden bg-[#1c1d1f] font-['JetBrains_Mono','DejaVu_Sans_Mono',monospace] text-[12px] leading-none">
      <TabBar />
      <div className="h-[69px] shrink-0 border-b border-[#343436] bg-[#414244]">
        <NavBar />
        <Bookmarks />
      </div>
      <Header />
      <Toolbar />
      <div className="flex min-h-0 flex-1">
        <Sidebar />
        <Canvas />
        <FormatPanel />
      </div>
      <Taskbar />
    </div>
  );
}
